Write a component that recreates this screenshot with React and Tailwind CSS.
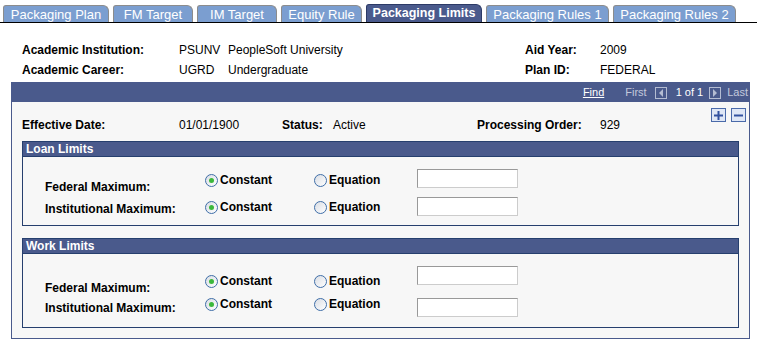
import React from 'react';

const tabs = [
  { label: 'Packaging Plan', w: 'w-[106px]' },
  { label: 'FM Target', w: 'w-[80px]' },
  { label: 'IM Target', w: 'w-[80px]' },
  { label: 'Equity Rule', w: 'w-[81px]' },
  { label: 'Packaging Limits', w: 'w-[116px]', active: true },
  { label: 'Packaging Rules 1', w: 'w-[123px]' },
  { label: 'Packaging Rules 2', w: 'w-[123px]' },
];

const Tab = ({ label, w, active }) => (
  <div
    className={`${w} flex items-center justify-center rounded-tr-[6px] rounded-tl-[3px] border border-b-0 leading-none whitespace-nowrap ${
      active
        ? 'h-[18px] bg-[#4a5a8c] border-[#2c3a66] font-bold text-white text-[12.5px]'
        : 'h-[17px] bg-[#7b9ed0] border-[#8c8c8c] text-white text-[13px]'
    }`}
  >
    {label}
  </div>
);

const Radio = ({ checked }) => (
  <span className="w-[13px] h-[13px] rounded-full border border-[#3f6ea8] bg-gradient-to-br from-[#d9dde4] to-white flex items-center justify-center shrink-0">
    {checked && <span className="w-[5px] h-[5px] rounded-full bg-[#3bb83b]" />}
  </span>
);

const TextBox = ({ top }) => (
  <div className={`${top} w-[101px] h-[19px] bg-white border border-t-[#999] border-l-[#999] border-b-[#ccc] border-r-[#ccc]`} />
);

const LimitRow = ({ label, labelTop, radioTop, inputTop }) => (
  <div className="flex items-start h-[28px]">
    <div className={`${labelTop} w-[160px] h-[20px] leading-[20px] font-bold`}>{label}</div>
    <div className={`${radioTop} w-[109px] flex items-center gap-[2px] font-bold leading-[13px]`}>
      <Radio checked />
      <span>Constant</span>
    </div>
    <div className={`${radioTop} w-[103px] flex items-center gap-[2px] font-bold leading-[13px]`}>
      <Radio />
      <span>Equation</span>
    </div>
    <TextBox top={inputTop} />
  </div>
);

const Section = ({ title, className = '', children }) => (
  <div className={`mx-[10px] border border-[#263f6e] ${className}`}>
    <div className="h-[15px] bg-[#4a5a8c] border-b border-[#263f6e] pl-[3px] text-white font-bold leading-[15px]">
      {title}
    </div>
    {children}
  </div>
);

const NavBox = ({ dir }) => (
  <span className="w-[12px] h-[12px] border border-[#b4bcd2] flex items-center justify-center shrink-0">
    <svg width="6" height="8" viewBox="0 0 6 8">
      {dir === 'left' ? <path d="M5 0 L1 4 L5 8 Z" fill="#b4bcd2" /> : <path d="M1 0 L5 4 L1 8 Z" fill="#b4bcd2" />}
    </svg>
  </span>
);

const App = () => {
  return (
    <div className="w-[757px] h-[342px] bg-white text-[12px] text-black font-['Liberation_Sans',Arial,sans-serif] overflow-hidden">
      {/* Tabs */}
      <div className="h-[23px] flex items-end gap-[4px] pl-[3px] border-b border-black">
        {tabs.map((t) => (
          <Tab key={t.label} {...t} />
        ))}
      </div>

      {/* Key fields */}
      <div className="pt-[17px] pl-[22px]">
        <div className="flex h-[20px] leading-[20px]">
          <div className="w-[157px] font-bold">Academic Institution:</div>
          <div className="w-[49px]">PSUNV</div>
          <div className="w-[297px]">PeopleSoft University</div>
          <div className="w-[75px] font-bold">Aid Year:</div>
          <div>2009</div>
        </div>
        <div className="flex h-[20px] leading-[20px]">
          <div className="w-[157px] font-bold">Academic Career:</div>
          <div className="w-[49px]">UGRD</div>
          <div className="w-[297px]">Undergraduate</div>
          <div className="w-[75px] font-bold">Plan ID:</div>
          <div>FEDERAL</div>
        </div>
      </div>

      {/* Main box */}
      <div className="mt-[2px] ml-[11px] w-[739px] border border-[#4a5a8c] bg-[#f7f7f7]">
        <div className="h-[19px] bg-[#4a5a8c] flex items-center justify-end pr-[1px] text-[11px] leading-none whitespace-nowrap">
          <span className="text-white underline mr-[21px]">Find</span>
          <span className="text-[#c3c9dc] mr-[8px]">First</span>
          <NavBox dir="left" />
          <span className="text-white ml-[9px] mr-[6px]">1 of 1</span>
          <NavBox dir="right" />
          <span className="text-[#c3c9dc] ml-[6px]">Last</span>
        </div>

        <div className="relative">
          <div className="absolute top-[6px] right-[3px] flex gap-[5px]">
            <span className="w-[15px] h-[14px] border border-[#4a6aaa] bg-[#dfe7f6] flex items-center justify-center">
              <svg width="9" height="9" viewBox="0 0 9 9">
                <path d="M3.5 0h2v3.5H9v2H5.5V9h-2V5.5H0v-2h3.5z" fill="#3352a0" />
              </svg>
            </span>
            <span className="w-[15px] h-[14px] border border-[#4a6aaa] bg-[#dfe7f6] flex items-center justify-center">
              <svg width="9" height="9" viewBox="0 0 9 9">
                <path d="M0 3.5h9v2H0z" fill="#3352a0" />
              </svg>
            </span>
          </div>

          <div className="flex pt-[13px] pl-[10px] h-[33px] leading-[20px]">
            <div className="w-[157px] font-bold">Effective Date:</div>
            <div className="w-[103px]">01/01/1900</div>
            <div className="w-[51px] font-bold">Status:</div>
            <div className="w-[144px]">Active</div>
            <div className="w-[123px] font-bold">Processing Order:</div>
            <div>929</div>
          </div>

          <Section title="Loan Limits" className="mt-[6px]">
            <div className="pl-[22px] pt-[10px] pb-[2px]">
              <LimitRow label="Federal Maximum:" labelTop="mt-[10px]" radioTop="mt-[7px]" inputTop="mt-[2px]" />
              <LimitRow label="Institutional Maximum:" labelTop="mt-[4px]" radioTop="mt-[6px]" inputTop="mt-[2px]" />
            </div>
          </Section>

          <Section title="Work Limits" className="mt-[12px] mb-[10px]">
            <div className="pl-[22px] pt-[10px] pb-[7px]">
              <LimitRow label="Federal Maximum:" labelTop="mt-[14px]" radioTop="mt-[11px]" inputTop="mt-[2px]" />
              <LimitRow label="Institutional Maximum:" labelTop="mt-[6px]" radioTop="mt-[6px]" inputTop="mt-[6px]" />
            </div>
          </Section>
        </div>
      </div>
    </div>
  );
};

export default App;
